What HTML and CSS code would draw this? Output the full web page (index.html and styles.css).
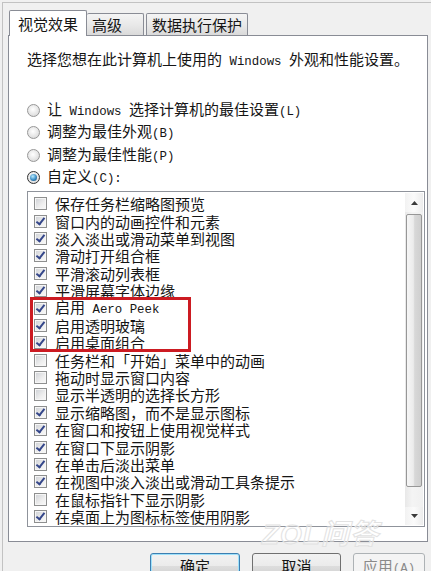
FILE: index.html
```html
<!DOCTYPE html>
<html lang="zh-CN">
<head>
  <meta charset="UTF-8">
  <title>性能选项 - 视觉效果</title>
  <link rel="stylesheet" href="styles.css">
</head>
<body>
  <div class="win">
    <div class="tabs">
      <div class="tab active t1">视觉效果</div>
      <div class="tab t2">高级</div>
      <div class="tab t3">数据执行保护</div>
    </div>

    <div class="panel">
      <p class="intro">选择您想在此计算机上使用的<span class="lat"> Windows </span>外观和性能设置。</p>

      <div class="radios">
        <div class="radio"><span class="rd"></span><span class="txt">让<span class="lat"> Windows </span>选择计算机的最佳设置<span class="lat">(L)</span></span></div>
        <div class="radio"><span class="rd"></span><span class="txt">调整为最佳外观<span class="lat">(B)</span></span></div>
        <div class="radio"><span class="rd"></span><span class="txt">调整为最佳性能<span class="lat">(P)</span></span></div>
        <div class="radio"><span class="rd on"></span><span class="txt">自定义<span class="lat">(C):</span></span></div>
      </div>

      <div class="listbox">
        <div class="items">
          <div class="row"><span class="cb"></span><span class="txt">保存任务栏缩略图预览</span></div>
          <div class="row"><span class="cb on"></span><span class="txt">窗口内的动画控件和元素</span></div>
          <div class="row"><span class="cb on"></span><span class="txt">淡入淡出或滑动菜单到视图</span></div>
          <div class="row"><span class="cb on"></span><span class="txt">滑动打开组合框</span></div>
          <div class="row"><span class="cb on"></span><span class="txt">平滑滚动列表框</span></div>
          <div class="row"><span class="cb on"></span><span class="txt">平滑屏幕字体边缘</span></div>
          <div class="hl">
            <div class="row"><span class="cb on"></span><span class="txt">启用<span class="lat"> Aero Peek</span></span></div>
            <div class="row"><span class="cb on"></span><span class="txt">启用透明玻璃</span></div>
            <div class="row"><span class="cb on"></span><span class="txt">启用桌面组合</span></div>
          </div>
          <div class="row"><span class="cb"></span><span class="txt">任务栏和「开始」菜单中的动画</span></div>
          <div class="row"><span class="cb"></span><span class="txt">拖动时显示窗口内容</span></div>
          <div class="row"><span class="cb"></span><span class="txt">显示半透明的选择长方形</span></div>
          <div class="row"><span class="cb on"></span><span class="txt">显示缩略图，而不是显示图标</span></div>
          <div class="row"><span class="cb on"></span><span class="txt">在窗口和按钮上使用视觉样式</span></div>
          <div class="row"><span class="cb on"></span><span class="txt">在窗口下显示阴影</span></div>
          <div class="row"><span class="cb on"></span><span class="txt">在单击后淡出菜单</span></div>
          <div class="row"><span class="cb on"></span><span class="txt">在视图中淡入淡出或滑动工具条提示</span></div>
          <div class="row"><span class="cb"></span><span class="txt">在鼠标指针下显示阴影</span></div>
          <div class="row"><span class="cb on"></span><span class="txt">在桌面上为图标标签使用阴影</span></div>
        </div>
        <div class="scrollbar">
          <div class="sb-btn up">
            <svg width="7" height="4" viewBox="0 0 7 4"><polygon points="0,4 3.5,0 7,4" fill="#3a3a3a"/></svg>
          </div>
          <div class="thumb"></div>
          <div class="sb-btn down">
            <svg width="7" height="4" viewBox="0 0 7 4"><polygon points="0,0 7,0 3.5,4" fill="#3a3a3a"/></svg>
          </div>
        </div>
      </div>
    </div>

    <div class="buttons">
      <div class="btn default">确定</div>
      <div class="btn">取消</div>
      <div class="btn disabled">应用<span class="lat">(A)</span></div>
    </div>

    <span class="mark">ZOL问答</span>
  </div>
</body>
</html>
```

FILE: styles.css
```css
html, body {
  height: 571px;
}
body {
  margin: 0;
  background: #f0f0f0;
  font-family: "Noto Sans CJK SC", sans-serif;
  font-size: 15px;
  color: #151515;
  overflow: hidden;
}
.lat {
  font-family: "Liberation Mono", monospace;
  font-size: 12.4px;
  white-space: pre;
}
.win {
  position: relative;
  box-sizing: border-box;
  height: 569px;
  margin: 2px 0 0 2px;
  padding: 7px 0 0 5px;
  overflow: hidden;
  border-top: 1px solid #c2c2c2;
  border-left: 1px solid #c2c2c2;
}

/* tabs */
.tabs {
  position: relative;
  z-index: 1;
  display: flex;
  align-items: flex-end;
  height: 25px;
  padding-left: 1px;
}
.tab {
  box-sizing: border-box;
  height: 22px;
  line-height: 21px;
  text-align: center;
  border: 1px solid #898c95;
  border-bottom: none;
  border-radius: 2px 2px 0 0;
  background: linear-gradient(#f4f4f4, #e9e9e9 50%, #dadada);
}
.tab.active {
  height: 26px;
  line-height: 25px;
  margin-bottom: -1px;
  background: #fff;
}
.t1 { width: 78px; }
.t2 { width: 57px; text-align: left; padding-left: 5px; border-left: none; }
.t3 { width: 102px; margin-left: 2px; }

/* panel */
.panel {
  box-sizing: border-box;
  width: 420px;
  height: 507px;
  padding: 13px 2px 0 18px;
  border: 1px solid #898c95;
  background: #fff;
}
.intro {
  margin: 0;
  line-height: 20px;
  white-space: nowrap;
}
.radios {
  margin-top: 27px;
}
.radio {
  display: flex;
  align-items: center;
  height: 22.5px;
  white-space: nowrap;
}
.txt {
  line-height: 17px;
  white-space: nowrap;
}
.rd {
  position: relative;
  flex: none;
  box-sizing: border-box;
  width: 13px;
  height: 13px;
  margin-right: 7px;
  border: 1px solid #979797;
  border-radius: 50%;
  background: radial-gradient(circle at 45% 40%, #ffffff, #e4e4e4 60%, #cfcfcf);
}
.rd.on {
  border-color: #303030;
}
.rd.on::after {
  content: '';
  position: absolute;
  left: 2px;
  top: 2px;
  width: 7px;
  height: 7px;
  border-radius: 50%;
  background: radial-gradient(circle at 40% 35%, #b8ecff, #3a8cc4 55%, #0f3f66);
}

/* list box */
.listbox {
  display: flex;
  box-sizing: border-box;
  width: 398px;
  height: 336px;
  margin-top: 2px;
  border: 1px solid #8f939b;
  background: #fff;
}
.items {
  flex: 1;
  padding: 3px 0 0 6px;
}
.row {
  display: flex;
  align-items: center;
  height: 17.4px;
  white-space: nowrap;
}
.cb {
  position: relative;
  flex: none;
  box-sizing: border-box;
  width: 13px;
  height: 13px;
  margin-right: 8px;
  border: 1px solid #8e8f8f;
  box-shadow: inset 0 0 0 1px #f6f6f6;
  background: linear-gradient(135deg, #cdd0d5, #eeeeee 60%, #fafafa);
}
.cb.on::after {
  content: '';
  position: absolute;
  left: 3px;
  top: 0;
  width: 3px;
  height: 7px;
  border: solid #34468a;
  border-width: 0 2px 2px 0;
  transform: rotate(38deg);
}
.hl {
  position: relative;
}
.hl::after {
  content: '';
  position: absolute;
  left: -4px;
  top: -2px;
  width: 161px;
  height: 55px;
  box-sizing: border-box;
  border: 3px solid #cc1b22;
}

/* scrollbar */
.scrollbar {
  display: flex;
  flex-direction: column;
  width: 18px;
  margin: 1px 1px 1px 0;
  background: linear-gradient(90deg, #e8e8e8, #f4f4f4 40%, #f0f0f0);
}
.sb-btn {
  display: flex;
  align-items: center;
  justify-content: center;
  height: 19px;
  background: linear-gradient(90deg, #f2f2f2, #fbfbfb 50%, #ececec);
}
.sb-btn.down {
  height: 18px;
  margin-top: auto;
}
.thumb {
  box-sizing: border-box;
  height: 273px;
  margin: 2px 1px 0;
  border: 1px solid #979797;
  border-radius: 2px;
  background: linear-gradient(90deg, #f6f6f6, #ececec 45%, #d8d8d8 55%, #cfcfcf);
}

/* buttons */
.buttons {
  display: flex;
  gap: 12px;
  margin-top: 11px;
  padding-left: 142px;
}
.btn {
  box-sizing: border-box;
  flex: none;
  width: 89px;
  height: 26px;
  line-height: 24px;
  text-align: center;
  white-space: nowrap;
  border: 1px solid #707070;
  border-radius: 3px;
  background: linear-gradient(#f2f2f2, #ebebeb 50%, #dddddd 51%, #cfcfcf);
}
.btn.default {
  width: 90px;
  border-color: #3c7fb1;
  box-shadow: inset 0 0 0 1px #9ee0fa;
}
.btn.disabled {
  width: 72px;
  color: #8a8a8a;
  border-color: #adb2b5;
  background: #f4f4f4;
}

/* watermark over the dialog */
.mark {
  position: absolute;
  left: 259px;
  top: 519px;
  line-height: 26px;
  font-family: "Liberation Sans", "Noto Sans CJK SC", sans-serif;
  font-size: 28px;
  font-weight: bold;
  font-style: italic;
  color: rgba(255, 255, 255, 0.4);
  -webkit-text-stroke: 1px #e2e2e2;
  letter-spacing: 1px;
}
```
